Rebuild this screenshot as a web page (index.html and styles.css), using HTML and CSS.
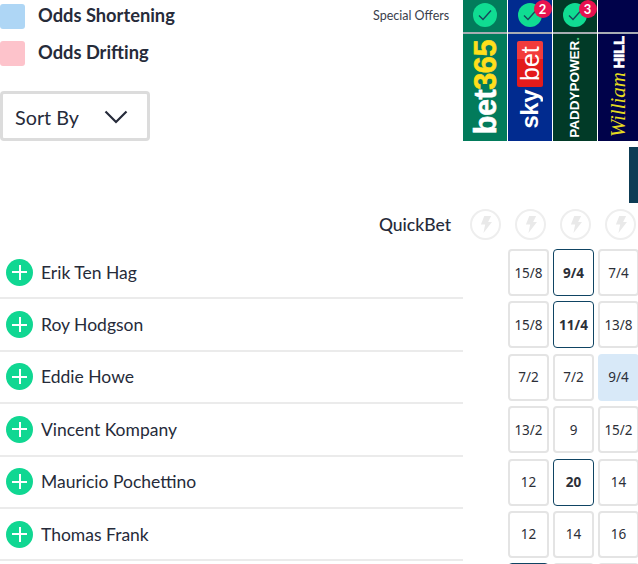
FILE: index.html
```html
<!DOCTYPE html>
<html lang="en">
<head>
<meta charset="utf-8">
<title>Odds</title>
<link rel="stylesheet" href="styles.css">
</head>
<body>
<div class="page">
  <header class="top">
    <div class="legend">
      <div class="legend-item"><span class="swatch swatch-blue"></span><span class="legend-text">Odds Shortening</span></div>
      <div class="legend-item"><span class="swatch swatch-pink"></span><span class="legend-text">Odds Drifting</span></div>
      <div class="sort"><span>Sort By</span>
        <svg class="chevron" width="24" height="14" viewBox="0 0 24 14"><path d="M1.5 1.5 L12 12 L22.5 1.5" fill="none" stroke="#262b3a" stroke-width="2.2"/></svg>
      </div>
    </div>
    <div class="offers">Special Offers</div>
    <div class="books">
      <div class="book book-bet365">
        <div class="tick-cell"><span class="tick"><svg width="14" height="12" viewBox="0 0 14 12"><path d="M1 6.5 L5 10.5 L13 1.5" fill="none" stroke="#17465a" stroke-width="1.4"/></svg></span></div>
        <div class="logo"><span class="logo-text bet365">bet<span class="yellow">365</span></span></div>
      </div>
      <div class="book book-sky">
        <div class="tick-cell"><span class="tick"><svg width="14" height="12" viewBox="0 0 14 12"><path d="M1 6.5 L5 10.5 L13 1.5" fill="none" stroke="#17465a" stroke-width="1.4"/></svg><span class="badge">2</span></span></div>
        <div class="logo logo-sky"><span class="logo-text sky-bet">bet</span><span class="logo-text sky">sky</span></div>
      </div>
      <div class="book book-paddy">
        <div class="tick-cell"><span class="tick"><svg width="14" height="12" viewBox="0 0 14 12"><path d="M1 6.5 L5 10.5 L13 1.5" fill="none" stroke="#17465a" stroke-width="1.4"/></svg><span class="badge">3</span></span></div>
        <div class="logo"><span class="logo-text paddy">PADDYPOWER<span class="green">.</span></span></div>
      </div>
      <div class="book book-hill">
        <div class="tick-cell"></div>
        <div class="logo logo-hill"><span class="logo-text hill">HILL</span><span class="logo-text william">William</span></div>
      </div>
    </div>
  </header>

  <div class="stripe-row"><span class="stripe"></span></div>

  <div class="quick">
    <div class="quick-label">QuickBet</div>
    <div class="quick-icons">
      <span class="bolt"><svg width="12" height="17" viewBox="0 0 14 20"><path d="M5 0 H13 L9.5 7 H14 L4 20 L6 10 H1 Z" fill="#e9e9e9"/></svg></span>
      <span class="bolt"><svg width="12" height="17" viewBox="0 0 14 20"><path d="M5 0 H13 L9.5 7 H14 L4 20 L6 10 H1 Z" fill="#e9e9e9"/></svg></span>
      <span class="bolt"><svg width="12" height="17" viewBox="0 0 14 20"><path d="M5 0 H13 L9.5 7 H14 L4 20 L6 10 H1 Z" fill="#e9e9e9"/></svg></span>
      <span class="bolt"><svg width="12" height="17" viewBox="0 0 14 20"><path d="M5 0 H13 L9.5 7 H14 L4 20 L6 10 H1 Z" fill="#e9e9e9"/></svg></span>
    </div>
  </div>

  <div class="row">
    <div class="name-cell"><span class="plus"></span><span class="name">Erik Ten Hag</span></div>
    <div class="odds"><span class="odd">15/8</span><span class="odd odd-best">9/4</span><span class="odd">7/4</span></div>
  </div>
  <div class="row">
    <div class="name-cell"><span class="plus"></span><span class="name">Roy Hodgson</span></div>
    <div class="odds"><span class="odd">15/8</span><span class="odd odd-best">11/4</span><span class="odd">13/8</span></div>
  </div>
  <div class="row">
    <div class="name-cell"><span class="plus"></span><span class="name">Eddie Howe</span></div>
    <div class="odds"><span class="odd">7/2</span><span class="odd">7/2</span><span class="odd odd-short">9/4</span></div>
  </div>
  <div class="row">
    <div class="name-cell"><span class="plus"></span><span class="name">Vincent Kompany</span></div>
    <div class="odds"><span class="odd">13/2</span><span class="odd">9</span><span class="odd">15/2</span></div>
  </div>
  <div class="row">
    <div class="name-cell"><span class="plus"></span><span class="name">Mauricio Pochettino</span></div>
    <div class="odds"><span class="odd">12</span><span class="odd odd-best">20</span><span class="odd">14</span></div>
  </div>
  <div class="row">
    <div class="name-cell"><span class="plus"></span><span class="name">Thomas Frank</span></div>
    <div class="odds"><span class="odd">12</span><span class="odd">14</span><span class="odd">16</span></div>
  </div>
  <div class="row">
    <div class="name-cell name-cell-empty"></div>
    <div class="odds"><span class="odd odd-best"></span><span class="odd"></span><span class="odd"></span></div>
  </div>
</div>
</body>
</html>
```

FILE: styles.css
```css
* { box-sizing: border-box; }
html, body { margin: 0; padding: 0; background: #fff; }
body { font-family: "Lato", "Noto Sans", sans-serif; color: #262b3a; }

.page { width: 638px; height: 564px; overflow: hidden; }

.top { display: flex; height: 141px; }

.legend { width: 367px; flex: none; padding-top: 4px; display: flex; flex-direction: column; }
.legend-item { display: flex; align-items: center; gap: 13px; height: 25px; margin-bottom: 12px; }
.swatch { width: 25px; height: 25px; border-radius: 3px; }
.swatch-blue { background: #aed6f5; }
.swatch-pink { background: #fdc3cb; }
.legend-text { font-size: 18.3px; font-weight: 700; line-height: 1; position: relative; top: -1px; }

.sort {
  width: 150px; height: 50px; margin-top: 13px;
  border: 3px solid #dcdcdc; border-radius: 4px;
  display: flex; align-items: center; justify-content: space-between;
  padding: 2px 19px 0 12px; font-size: 19.8px;
}

.offers { width: 96px; flex: none; padding: 8px 0 0 6px; font-size: 12.5px; line-height: 15px; color: #3a3e4b; white-space: nowrap; }

.books { display: flex; gap: 1px; flex: 1; min-width: 0; }
.book { width: 44px; flex: none; display: flex; flex-direction: column; }
.book-hill { width: 40px; }
.book-bet365 { background: #027b5b; }
.book-sky { background: #012b8f; }
.book-paddy { background: #013a27; }
.book-hill { background: #00024a; }

.tick-cell { height: 32px; flex: none; display: flex; justify-content: center; align-items: flex-start; padding: 3px 1px 0 0; }
.tick {
  position: relative; width: 24px; height: 24px; border-radius: 50%;
  background: #10dc92; display: flex; align-items: center; justify-content: center;
}
.badge {
  position: absolute; top: -3px; left: 16px; width: 18px; height: 18px; border-radius: 50%;
  background: #e8124f; color: #fff; font-size: 13px; font-weight: 700; line-height: 18px; text-align: center;
}

.logo {
  border-top: 2px solid #a9adb3; flex: 1; display: flex; flex-direction: column;
  align-items: center; justify-content: center; overflow: hidden;
}
.logo-text { writing-mode: vertical-rl; transform: rotate(180deg); font-family: "Liberation Sans", sans-serif; color: #fff; white-space: nowrap; line-height: 1; }
.bet365 { font-size: 30.5px; font-weight: 700; letter-spacing: -0.4px; -webkit-text-stroke: 0.6px currentColor; }
.yellow { color: #ffdf1b; }
.logo-sky { justify-content: flex-start; padding-top: 7px; }
.sky-bet { width: 26px; height: 46px; background: linear-gradient(180deg, #e31b1b 60%, #f23b3b 60%); border-radius: 2px; font-size: 25px; display: flex; align-items: center; justify-content: center; }
.sky { font-size: 24px; font-weight: 700; margin-top: 3px; letter-spacing: -0.5px; }
.paddy { font-size: 13.6px; font-weight: 700; letter-spacing: -0.1px; }
.green { color: #4ec47a; }
.logo-hill { justify-content: flex-start; padding-top: 2px; }
.hill { font-size: 15px; font-weight: 700; letter-spacing: -0.2px; -webkit-text-stroke: 0.7px currentColor; }
.william { font-family: "Liberation Serif", serif; font-style: italic; font-size: 21px; color: #e6dc20; margin-top: 3px; }

.stripe-row { display: flex; justify-content: flex-end; margin-top: 6px; height: 56px; }
.stripe { width: 9px; background: #0d3c55; }

.quick { display: flex; height: 32px; margin-top: 6px; }
.quick-label { width: 451px; flex: none; text-align: right; font-size: 17.5px; line-height: 32px; font-weight: 500; }
.quick-icons { display: flex; gap: 14px; padding-left: 19px; }
.bolt {
  flex: none; width: 31px; height: 31px; border-radius: 50%; border: 2px solid #eeeeee;
  display: flex; align-items: center; justify-content: center;
}

.quick + .row { margin-top: 6px; }
.row { display: flex; height: 52.4px; flex: none; }
.name-cell {
  width: 463px; flex: none; display: flex; align-items: center; gap: 8px; padding-left: 6px;
  border-bottom: 2px solid #ebebeb;
}
.plus {
  flex: none; width: 27px; height: 27px; border-radius: 50%; background: #10d792; position: relative;
}
.plus::before, .plus::after { content: ""; position: absolute; background: #fff; }
.plus::before { left: 6px; right: 6px; top: 12.5px; height: 2px; }
.plus::after { top: 6px; bottom: 6px; left: 12.5px; width: 2px; }
.name { font-size: 17.5px; }

.odds { display: flex; gap: 4px; padding: 2px 0 0 45px; flex: none; }
.odd {
  flex: none; width: 41px; height: 47px; border: 2px solid #e4e4e4; border-radius: 4px;
  display: flex; align-items: center; justify-content: center;
  font-family: "Noto Sans", sans-serif; font-size: 13.5px; color: #2c2f38;
}
.odd-best { border: 1px solid #0f4463; font-weight: 700; }
.odd-short { background: #d8e9f8; border-color: #d8e9f8; }
```
